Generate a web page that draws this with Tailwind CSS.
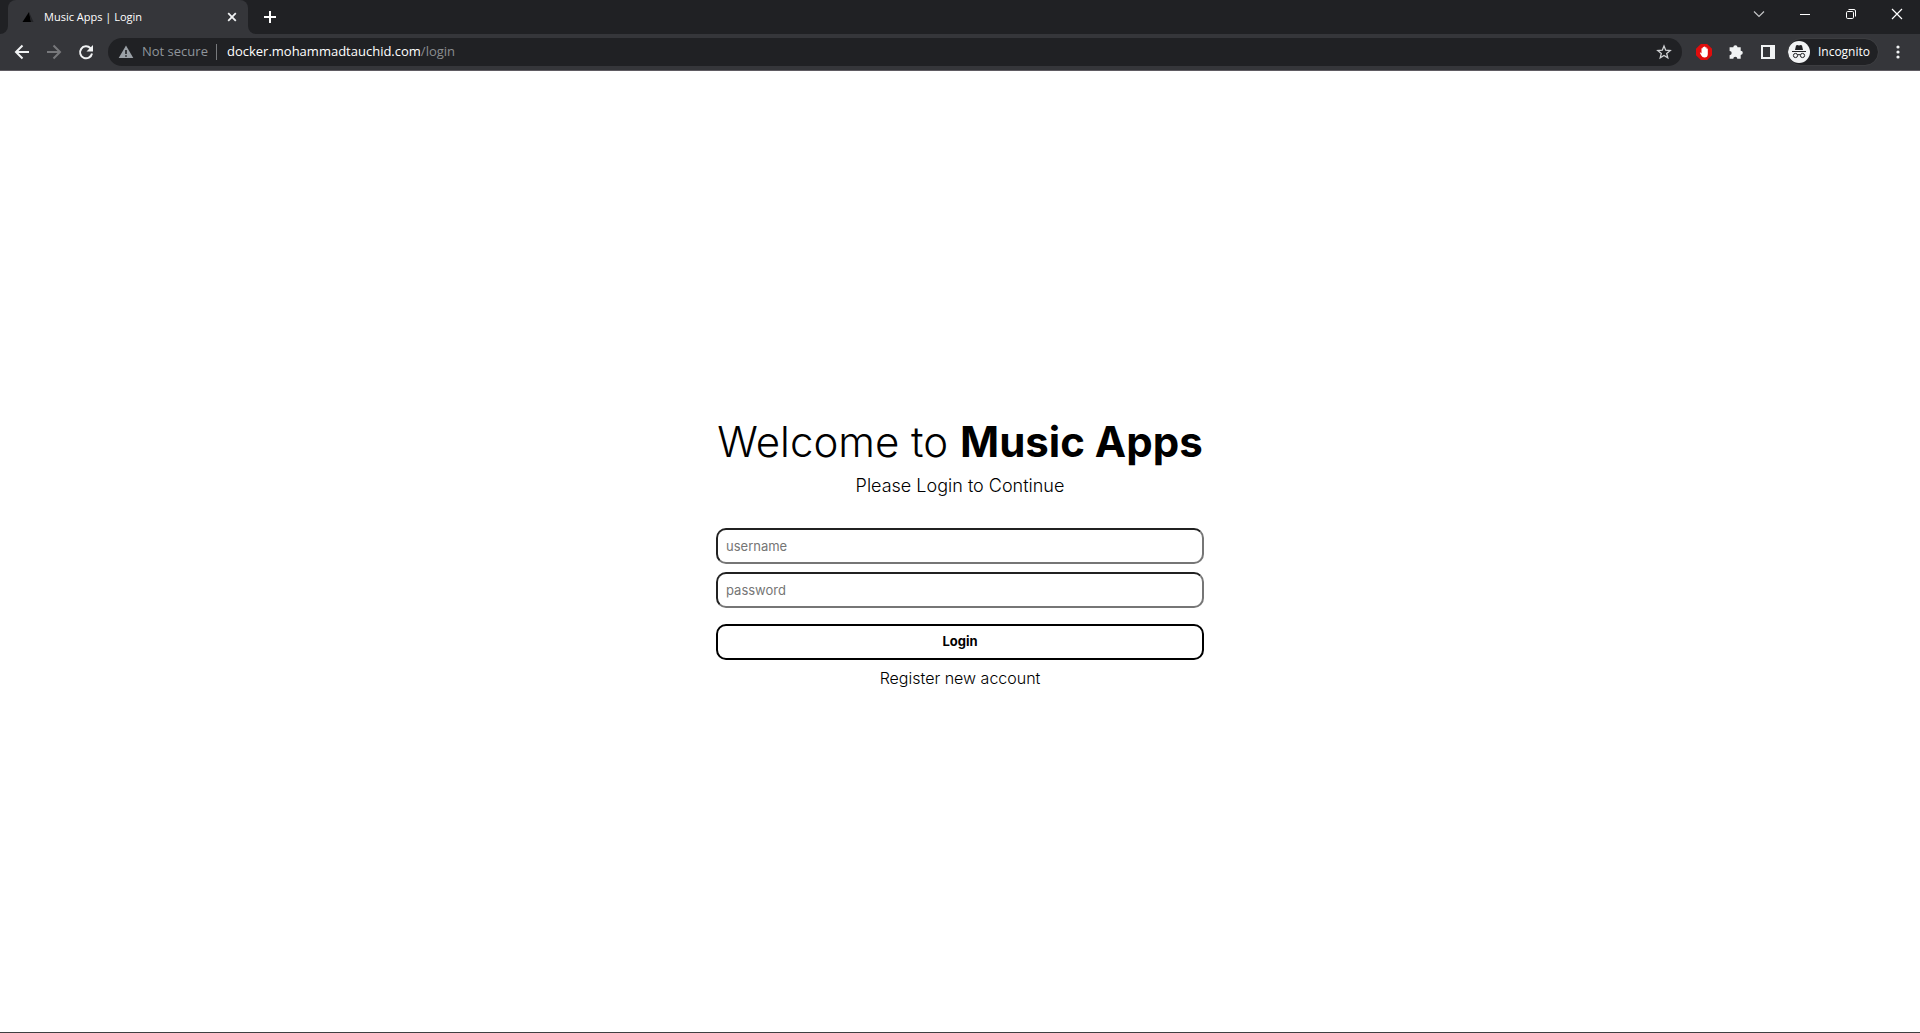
<!DOCTYPE html>
<html lang="en">
<head>
<meta charset="utf-8">
<meta name="viewport" content="width=device-width, initial-scale=1">
<title>Music Apps | Login</title>
<script src="https://cdn.jsdelivr.net/npm/@tailwindcss/browser@4"></script>
</head>
<body class="flex min-h-screen flex-col bg-white font-['Inter',sans-serif] text-black">
<header class="flex flex-col border-b border-[#5f5b62] bg-[#35363a] font-['Open_Sans',sans-serif]">
  <!-- Tab strip -->
  <div class="flex h-[34px] bg-[#202124]">
    <div class="flex w-2 bg-[#35363a]"><div class="w-full rounded-br-lg bg-[#202124]"></div></div>
    <div class="flex w-60 items-center rounded-t-lg bg-[#35363a] pr-2 pl-3">
      <svg class="size-4" viewBox="0 0 16 16" aria-hidden="true"><path d="M2.500 13 9 3 11 13Z" fill="#000"/><path d="M9 3 13.500 13H11Z" fill="#222326"/></svg>
      <span class="ml-2 flex-1 text-[11px] whitespace-nowrap text-white">Music Apps | Login</span>
      <button class="size-4" aria-label="Close tab"><svg viewBox="0 0 16 16" fill="none" stroke="#f1f3f4" stroke-width="1.800"><path d="m4.200 4.200 7.600 7.600m0-7.600-7.600 7.600"/></svg></button>
    </div>
    <div class="flex w-2 bg-[#35363a]"><div class="w-full rounded-bl-lg bg-[#202124]"></div></div>
    <button class="ml-1.5 flex h-[34px] w-4 items-center" aria-label="New tab"><svg class="size-4" viewBox="0 0 16 16" fill="none" stroke="#fff" stroke-width="2"><path d="M8 2v12M2 8h12"/></svg></button>
    <div class="ml-auto flex h-7 items-center text-white">
      <button class="flex w-[46px] justify-center" aria-label="Search tabs"><svg class="size-4" viewBox="0 0 16 16" fill="none" stroke="#c4c5c7" stroke-width="1.200"><path d="m3 5.500 5 5 5-5"/></svg></button>
      <button class="flex w-[46px] justify-center" aria-label="Minimize"><svg class="size-4" viewBox="0 0 16 16" fill="none" stroke="#fff"><path d="M3 8.500h10"/></svg></button>
      <button class="flex w-[46px] justify-center" aria-label="Restore"><svg class="size-4" viewBox="0 0 16 16" fill="none" stroke="#fff"><rect x="3.500" y="5.500" width="7" height="7" rx="1.200"/><path d="M5.500 3.500H11q1.500 0 1.500 1.500v5.500"/></svg></button>
      <button class="flex w-[46px] justify-center" aria-label="Close"><svg class="size-4" viewBox="0 0 16 16" fill="none" stroke="#fff" stroke-width="1.200"><path d="m3 3 10 10M13 3 3 13"/></svg></button>
    </div>
  </div>
  <!-- Toolbar -->
  <div class="flex h-9 items-center pr-3.5 pl-3">
    <div class="flex w-24 items-center gap-3">
      <button aria-label="Back"><svg class="size-5" viewBox="0 0 20 20" fill="none" stroke="#f1f3f4" stroke-width="2"><path d="M17 10H4m6.500-6.500L4 10l6.500 6.500"/></svg></button>
      <button aria-label="Forward"><svg class="size-5" viewBox="0 0 20 20" fill="none" stroke="#77787b" stroke-width="2"><path d="M3 10h13M9.500 3.500 16 10l-6.500 6.500"/></svg></button>
      <button aria-label="Reload"><svg class="size-5" viewBox="0 0 20 20"><path d="M14.500 6.200A6 6 0 1 0 16 11.500" fill="none" stroke="#f1f3f4" stroke-width="2"/><path d="M17 3v6.500h-6.500Z" fill="#f1f3f4"/></svg></button>
    </div>
    <div class="flex h-7 flex-1 items-center rounded-full bg-[#202124] px-2.5 text-[13px]">
      <svg class="size-4" viewBox="0 0 16 16" aria-hidden="true"><path d="M8 1.500 15.300 14H.7Z" fill="#9aa0a6"/><path d="M8 6v4m0 1.200v1.600" stroke="#202124" stroke-width="1.600"/></svg>
      <span class="ml-2 text-[#8f959b]">Not secure</span>
      <span class="ml-2 h-4 w-px bg-[#77797c]"></span>
      <div role="textbox" aria-label="Address" class="ml-2.5 text-white">docker.mohammadtauchid.com<span class="text-[#8b8d90]">/login</span></div>
      <button class="ml-auto" aria-label="Bookmark this tab"><svg class="size-4" viewBox="0 0 16 16" fill="none" stroke="#d0d2d4" stroke-width="1.300"><path d="m8 2 1.700 4.200 4.500.3-3.500 2.900 1.100 4.400L8 11.400l-3.800 2.400 1.100-4.400-3.500-2.900 4.500-.3Z"/></svg></button>
    </div>
    <div class="ml-3.5 flex items-center gap-4">
      <button aria-label="Ad blocker"><svg class="size-4" viewBox="0 0 16 16"><path d="M4.800 0h6.400L16 4.800v6.400L11.200 16H4.800L0 11.200V4.800Z" fill="#e00d0d"/><path d="M3.800 8.800q.8-.8 1.700.6V4.500q.6-.8 1.200 0V3.200q.7-.8 1.300 0v-.4q.7-.8 1.300 0v.8q.7-.7 1.300 0v1.200q.7-.6 1.200 0V10q0 3.600-3.300 3.600-2.300 0-3.200-2.100Z" fill="#fff"/></svg></button>
      <button aria-label="Extensions"><svg class="size-4" viewBox="0 0 16 16" fill="#f1f3f4"><path d="M2 3.300h3.300a2.100 2.100 0 1 1 4.200 0h3.200v3.400a2.100 2.100 0 1 1 0 4.200v3.800H9.300a2 2 0 1 0-4 0H1.600v-3.500a2.100 2.100 0 1 0 0-4.200V3.300Z"/></svg></button>
      <button aria-label="Side panel"><svg class="size-4" viewBox="0 0 16 16"><path d="M1 1h14v14H1Zm2 2v10h7V3Z" fill="#f1f3f4" fill-rule="evenodd"/></svg></button>
    </div>
    <button class="ml-3 flex h-[26px] items-center rounded-full bg-[#202124] pr-2 text-xs text-white outline outline-[#3c3d40]">
      <svg class="mr-2 size-[22px]" viewBox="0 0 22 22" aria-hidden="true"><circle cx="11" cy="11" r="11" fill="#f1f3f4"/><path d="M7 9 8 4.500q1-.8 3 0 2-.8 3 0L15 9Z" fill="#202124"/><path d="M4 10.500h14M9.500 14q1.500-1 3 0" stroke="#202124" fill="none"/><g fill="none" stroke="#202124"><circle cx="7.500" cy="14.500" r="2.100"/><circle cx="14.500" cy="14.500" r="2.100"/></g></svg>
      Incognito
    </button>
    <button class="ml-3" aria-label="Menu"><svg class="size-4" viewBox="0 0 16 16" fill="#f1f3f4"><circle cx="8" cy="3" r="1.600"/><circle cx="8" cy="8" r="1.600"/><circle cx="8" cy="13" r="1.600"/></svg></button>
  </div>
</header>
<main class="flex flex-1 items-center justify-center border-b border-[#3f3f41]">
  <form class="flex w-full max-w-[488px] flex-col">
    <h1 class="text-center text-[42px] leading-[52px] font-[350]">Welcome to <strong class="font-bold">Music Apps</strong></h1>
    <p class="mt-1.5 text-center text-lg leading-6 font-[350]">Please Login to Continue</p>
    <input aria-label="Username" type="text" placeholder="username" class="mt-7.5 h-9 rounded-[10px] border-2 border-t-[#212121] border-r-[#767676] border-b-[#767676] border-l-[#212121] px-2 text-[13px] placeholder:text-[#757575]">
    <input aria-label="Password" type="password" placeholder="password" class="mt-2 h-9 rounded-[10px] border-2 border-t-[#212121] border-r-[#767676] border-b-[#767676] border-l-[#212121] px-2 text-[13px] placeholder:text-[#757575]">
    <button type="button" class="mt-4 h-9 rounded-[10px] border-2 border-black text-[13px] font-bold">Login</button>
    <a href="#" class="mt-2 text-center text-base leading-5 font-[350]">Register new account</a>
  </form>
</main>
</body>
</html>
